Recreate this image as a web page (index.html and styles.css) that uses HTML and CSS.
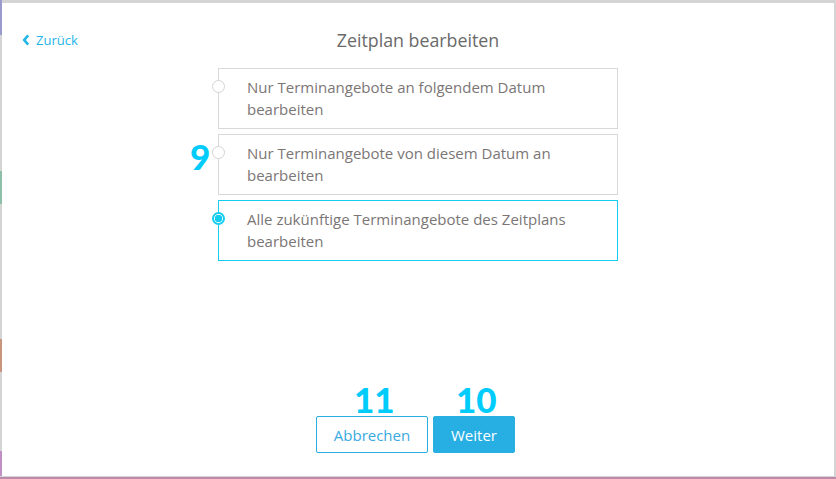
FILE: index.html
```html
<!DOCTYPE html>
<html lang="de">
<head>
<meta charset="utf-8">
<title>Zeitplan bearbeiten</title>
<link rel="stylesheet" href="styles.css">
</head>
<body>
<div class="page">
  <div class="row">
    <div class="strip">
      <span class="seg seg-purple"></span>
      <span class="gap g1"></span>
      <span class="seg seg-green"></span>
      <span class="gap g2"></span>
      <span class="seg seg-orange"></span>
      <span class="gap g3"></span>
      <span class="seg seg-pink"></span>
    </div>
    <div class="modal">
      <header class="head">
        <a class="back" href="#"><svg class="chev" width="8" height="12" viewBox="0 0 8 12"><path d="M6.2 1.3 L2.2 6 L6.2 10.7" fill="none" stroke="currentColor" stroke-width="2.6"/></svg>Zurück</a>
        <h1 class="title">Zeitplan bearbeiten</h1>
        <span></span>
      </header>
      <div class="options">
        <div class="option">
          <span class="radio"></span>
          <span class="label">Nur Terminangebote an folgendem Datum bearbeiten</span>
        </div>
        <div class="option">
          <span class="marker m9">9</span>
          <span class="radio"></span>
          <span class="label">Nur Terminangebote von diesem Datum an bearbeiten</span>
        </div>
        <div class="option selected">
          <span class="radio"></span>
          <span class="label">Alle zukünftige Terminangebote des Zeitplans bearbeiten</span>
        </div>
      </div>
      <div class="actions">
        <button class="btn btn-outline"><span class="marker m11">11</span>Abbrechen</button>
        <button class="btn btn-primary"><span class="marker m10">10</span>Weiter</button>
      </div>
    </div>
    <div class="rstrip"></div>
  </div>
  <div class="bottom"></div>
</div>
</body>
</html>
```
FILE: styles.css
```css
* { box-sizing: border-box; }
html, body { margin: 0; padding: 0; }
body {
  width: 836px;
  height: 479px;
  overflow: hidden;
  background: #d4d4d4;
  font-family: "Open Sans", "Liberation Sans", sans-serif;
}
.page {
  display: flex;
  flex-direction: column;
  height: 479px;
}
.row {
  flex: 1;
  display: flex;
  min-height: 0;
}
.strip {
  width: 2px;
  display: flex;
  flex-direction: column;
}
.seg { display: block; width: 2px; }
.seg-purple { height: 35px; background: #9a9acc; }
.g1 { height: 136px; }
.seg-green { height: 33px; background: #8cc0a8; }
.g2 { height: 135px; }
.seg-orange { height: 33px; background: #c8957e; }
.g3 { height: 79px; }
.seg-pink { flex: 1; background: #c090c4; }
.rstrip { width: 2px; }
.bottom {
  height: 2px;
  margin-top: 1px;
  background: #b98aa9;
}
.modal {
  flex: 1;
  margin-top: 3px;
  background: #fff;
  display: flex;
  flex-direction: column;
  align-items: center;
}
.head {
  width: 100%;
  display: grid;
  grid-template-columns: 1fr auto 1fr;
  align-items: center;
  padding-top: 24px;
  height: 50px;
}
.back {
  justify-self: start;
  margin-left: 20px;
  display: flex;
  align-items: center;
  gap: 6px;
  font-size: 13px;
  color: #23b4e8;
  text-decoration: none;
  line-height: 22px;
}
.chev { display: block; }
.title {
  margin: 0;
  font-size: 17.8px;
  font-weight: 400;
  color: #6a6a6a;
  line-height: 26px;
}
.options {
  margin-top: 15px;
  width: 400px;
  display: flex;
  flex-direction: column;
  gap: 5px;
}
.option {
  position: relative;
  display: flex;
  align-items: flex-start;
  border: 1px solid #d8d8d8;
  padding: 7px 12px 8px 0;
  min-height: 61px;
}
.option.selected { border-color: #14cdf0; }
.radio {
  flex: none;
  width: 13px;
  height: 13px;
  margin-left: -7px;
  margin-top: 4px;
  border-radius: 50%;
  border: 1px solid #d4d4d4;
  background: #fff;
}
.selected .radio {
  border: 2px solid #14cdf0;
  background: radial-gradient(circle, #14cdf0 0 3.5px, #fff 4px);
}
.label {
  margin-left: 22px;
  font-size: 15px;
  line-height: 22px;
  color: #7b7676;
}
.actions {
  margin-top: auto;
  margin-bottom: 23px;
  margin-right: 5px;
  display: flex;
  gap: 5px;
}
.btn {
  position: relative;
  height: 37px;
  font-family: "Open Sans", "Liberation Sans", sans-serif;
  font-size: 15px;
  border-radius: 2px;
  cursor: pointer;
  padding: 0;
}
.btn-outline {
  width: 112px;
  background: #fff;
  border: 1px solid #27ade2;
  color: #3aaae0;
}
.btn-primary {
  width: 82px;
  background: #27aee3;
  border: 1px solid #27aee3;
  color: #fff;
}
.marker {
  position: absolute;
  font-family: Lato, "Open Sans", sans-serif;
  font-weight: 900;
  font-size: 35px;
  line-height: 1;
  color: #00ccfc;
}
.m9 { left: -29px; top: 4px; }
.m11 { left: 37px; top: -35px; }
.m10 { left: 22px; top: -35px; }
```
